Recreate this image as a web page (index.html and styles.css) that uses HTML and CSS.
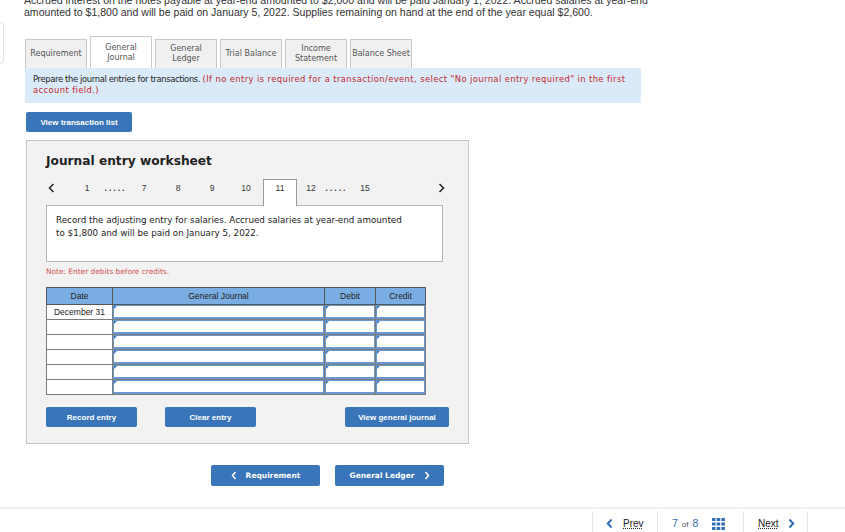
FILE: index.html
```html
<!DOCTYPE html>
<html lang="en">
<head>
    <meta charset="UTF-8" />
    <title>Journal entry worksheet</title>
    <link rel="stylesheet" href="styles.css">
</head>
<body>
    <div class="intro">
        Accrued interest on the notes payable at year-end amounted to $2,000 and will be paid January 1, 2022. Accrued salaries at year-end<br>
        amounted to $1,800 and will be paid on January 5, 2022. Supplies remaining on hand at the end of the year equal $2,600.
    </div>

    <div class="layout">
        <div class="side-tab"></div>
        <div class="main">
            <!-- TABS -->
            <div class="tabs">
                <div class="tab">Requirement</div>
                <div class="tab active">General<br>Journal</div>
                <div class="tab">General<br>Ledger</div>
                <div class="tab">Trial Balance</div>
                <div class="tab">Income<br>Statement</div>
                <div class="tab">Balance Sheet</div>
            </div>
            <div class="info">
                Prepare the journal entries for transactions. <span class="hint">(If no entry is required for a transaction/event, select "No journal entry required" in the first account field.)</span>
            </div>

            <button class="btn btn-list">View transaction list</button>

            <!-- WORKSHEET -->
            <div class="worksheet">
                <h2>Journal entry worksheet</h2>
                <div class="pager">
                    <span class="prev"><svg width="7" height="10" viewBox="0 0 7 10"><polyline points="5.5,1 1.5,5 5.5,9" fill="none" stroke="#222" stroke-width="1.5"/></svg></span>
                    <span>1</span>
                    <span class="dots">.....</span>
                    <span>7</span>
                    <span>8</span>
                    <span>9</span>
                    <span>10</span>
                    <span class="cur">11</span>
                    <span class="num12">12</span>
                    <span class="dots">.....</span>
                    <span>15</span>
                    <span class="next"><svg width="7" height="10" viewBox="0 0 7 10"><polyline points="1.5,1 5.5,5 1.5,9" fill="none" stroke="#222" stroke-width="1.5"/></svg></span>
                </div>
                <div class="desc">
                    <p>Record the adjusting entry for salaries. Accrued salaries at year-end amounted to $1,800 and will be paid on January 5, 2022.</p>
                </div>
                <p class="note">Note: Enter debits before credits.</p>

                <table class="journal">
                    <colgroup>
                        <col style="width:66px">
                        <col style="width:212px">
                        <col style="width:51px">
                        <col style="width:50px">
                    </colgroup>
                    <thead>
                        <tr><th>Date</th><th>General Journal</th><th>Debit</th><th>Credit</th></tr>
                    </thead>
                    <tbody id="rows"></tbody>
                </table>

                <div class="entry-actions">
                    <button class="btn btn-action">Record entry</button>
                    <button class="btn btn-action">Clear entry</button>
                    <button class="btn btn-action btn-view">View general journal</button>
                </div>
            </div>

            <div class="step-nav">
                <button class="step-btn"><svg width="6" height="9" viewBox="0 0 6 9"><polyline points="4.5,1 1.5,4.5 4.5,8" fill="none" stroke="#fff" stroke-width="1.5"/></svg> Requirement</button>
                <button class="step-btn">General Ledger <svg width="6" height="9" viewBox="0 0 6 9"><polyline points="1.5,1 4.5,4.5 1.5,8" fill="none" stroke="#fff" stroke-width="1.5"/></svg></button>
            </div>
        </div>
    </div>

    <!-- FOOTER -->
    <div class="footer">
        <div class="seg seg-prev">
            <svg width="7" height="11" viewBox="0 0 7 11"><polyline points="5.5,1.5 1.8,5.5 5.5,9.5" fill="none" stroke="#2f6db5" stroke-width="2"/></svg>
            <span class="link">Prev</span>
        </div>
        <div class="seg seg-count">
            <span class="page-no">7</span><span class="of">of</span><span class="page-no">8</span>
            <svg class="grid" width="13" height="12" viewBox="0 0 13 12">
                <rect x="0" y="0" width="3.5" height="3" fill="#2f6db5"/><rect x="4.7" y="0" width="3.5" height="3" fill="#2f6db5"/><rect x="9.4" y="0" width="3.5" height="3" fill="#2f6db5"/>
                <rect x="0" y="4.5" width="3.5" height="3" fill="#2f6db5"/><rect x="4.7" y="4.5" width="3.5" height="3" fill="#2f6db5"/><rect x="9.4" y="4.5" width="3.5" height="3" fill="#2f6db5"/>
                <rect x="0" y="9" width="3.5" height="3" fill="#2f6db5"/><rect x="4.7" y="9" width="3.5" height="3" fill="#2f6db5"/><rect x="9.4" y="9" width="3.5" height="3" fill="#2f6db5"/>
            </svg>
        </div>
        <div class="seg seg-next">
            <span class="link">Next</span>
            <svg width="7" height="11" viewBox="0 0 7 11"><polyline points="1.5,1.5 5.2,5.5 1.5,9.5" fill="none" stroke="#2f6db5" stroke-width="2"/></svg>
        </div>
    </div>

    <script>
        const rows = document.getElementById('rows');
        for (let i = 0; i < 6; i++) {
            const tr = document.createElement('tr');
            tr.innerHTML = `
                <td class="date">${i === 0 ? 'December 31' : ''}</td>
                <td class="field"><div class="input"></div></td>
                <td class="field"><div class="input"></div></td>
                <td class="field"><div class="input"></div></td>
            `;
            rows.appendChild(tr);
        }
    </script>
</body>
</html>
```

FILE: styles.css
```css
* {
    margin: 0;
    padding: 0;
    box-sizing: border-box;
}

body {
    font-family: "DejaVu Sans", Verdana, sans-serif;
    color: #222;
    background: #fff;
    width: 845px;
    height: 532px;
    overflow: hidden;
}

.intro {
    margin-top: -6px;
    padding-left: 24px;
    font-family: "Liberation Sans", Arial, sans-serif;
    font-size: 10.55px;
    line-height: 12px;
    color: #333;
    white-space: nowrap;
}

.layout {
    display: flex;
}

.side-tab {
    width: 4px;
    height: 42px;
    margin-top: 4px;
    border: 1px solid #e2e2e2;
    border-left: none;
    border-radius: 0 4px 4px 0;
}

.main {
    margin-left: 21px;
    padding-top: 18px;
    width: 616px;
}

/* tabs */
.tabs {
    display: flex;
    align-items: flex-end;
    gap: 3px;
    height: 32px;
}

.tab {
    width: 62px;
    height: 29px;
    padding: 0 1px;
    border: 1px solid #c9c9c9;
    border-bottom: none;
    background: #f0f0f0;
    color: #555;
    font-size: 8px;
    line-height: 10px;
    text-align: center;
    display: flex;
    align-items: center;
    justify-content: center;
}

.tab.active {
    height: 32px;
    background: #fff;
}

.info {
    background: #dbeaf8;
    height: 35px;
    padding: 6px 8px;
    font-size: 8.4px;
    line-height: 11px;
    letter-spacing: -0.35px;
}

.info .hint {
    color: #c0282e;
    letter-spacing: 0.4px;
}

/* buttons */
.btn {
    background: #3a75b9;
    color: #fff;
    border: none;
    border-radius: 2px;
    height: 20px;
    font-family: "Liberation Sans", Arial, sans-serif;
    font-weight: bold;
    font-size: 8px;
    cursor: pointer;
}

.btn-list {
    display: block;
    width: 106px;
    margin: 9px 0 0 1px;
}

/* worksheet */
.worksheet {
    width: 443px;
    margin: 8px 0 0 1px;
    padding: 12px 19px 16px 19px;
    background: #f2f2f2;
    border: 1px solid #c6c6c6;
}

.worksheet h2 {
    font-size: 12.2px;
    line-height: 16px;
    font-weight: bold;
    color: #222;
}

.pager {
    display: flex;
    height: 26px;
    margin-top: 10px;
    font-family: "Liberation Sans", Arial, sans-serif;
    font-size: 8.5px;
    color: #333;
}

.pager span {
    width: 34px;
    padding-top: 4px;
    line-height: 11px;
    text-align: center;
}

.pager .prev {
    width: 24px;
    text-align: left;
    padding: 4px 0 0 2px;
}

.pager .dots {
    width: 23px;
    letter-spacing: 2px;
    font-weight: bold;
}

.pager .num12 {
    width: 28px;
}

.pager .cur {
    position: relative;
    z-index: 1;
    height: 27px;
    background: #fff;
    border: 1px solid #9a9a9a;
    border-bottom: none;
    padding-top: 3px;
}

.pager .next {
    width: auto;
    margin-left: auto;
    padding-right: 4px;
}

.desc {
    width: 397px;
    height: 57px;
    padding: 8px 9px;
    background: #fff;
    border: 1px solid #b5b5b5;
    font-size: 8.75px;
    line-height: 13px;
    color: #222;
}

.desc p {
    max-width: 352px;
}

.note {
    margin-top: 5px;
    font-size: 7.4px;
    line-height: 10px;
    color: #d0504f;
}

/* journal table */
.journal {
    width: 379px;
    margin-top: 10px;
    border-collapse: collapse;
    table-layout: fixed;
    font-family: "Liberation Sans", Arial, sans-serif;
    font-size: 8.5px;
}

.journal th {
    height: 17px;
    background: #7aaee3;
    border: 1px solid #555;
    font-weight: normal;
    color: #222;
}

.journal td {
    height: 15px;
    padding: 0;
    background: #fff;
    border: 1px solid #7c7c7c;
}

.journal td.date {
    text-align: center;
    color: #222;
}

.input {
    position: relative;
    height: 14px;
    border: 1px solid #6b97cf;
    border-bottom-width: 2px;
    background: #fff;
}

.input::before {
    content: "";
    position: absolute;
    top: 0;
    left: 0;
    border-top: 3px solid #3b78c8;
    border-right: 3px solid transparent;
}

.entry-actions {
    display: flex;
    gap: 28px;
    margin-top: 12px;
}

.btn-action {
    width: 91px;
}

.btn-view {
    width: 104px;
    margin-left: auto;
}

/* step navigation */
.step-nav {
    display: flex;
    gap: 15px;
    margin-top: 21px;
    padding-left: 186px;
}

.step-btn {
    width: 109px;
    height: 21px;
    display: flex;
    align-items: center;
    justify-content: center;
    gap: 9px;
    background: #3a75b9;
    color: #fff;
    border: none;
    border-radius: 2px;
    font-family: "DejaVu Sans", Verdana, sans-serif;
    font-weight: bold;
    font-size: 7.5px;
}

/* footer */
.footer {
    margin-top: 21px;
    border-top: 2px solid #f0f0f0;
    display: flex;
    justify-content: flex-end;
    padding-right: 37px;
    font-family: "Liberation Sans", Arial, sans-serif;
    font-size: 10px;
    color: #222;
}

.seg {
    display: flex;
    align-items: flex-start;
    height: 30px;
    margin-top: 2px;
    padding-top: 6px;
    line-height: 13px;
    border-left: 1px solid #e6e6e6;
}

.seg svg {
    margin-top: 1px;
}

.seg-prev {
    width: 65px;
    padding-left: 13px;
    gap: 10px;
}

.seg-count {
    width: 86px;
    padding-left: 14px;
}

.seg-next {
    width: 65px;
    padding-left: 14px;
    gap: 9px;
    border-right: 1px solid #e6e6e6;
}

.link {
    text-decoration: underline dotted;
    text-underline-offset: 1px;
}

.page-no {
    color: #2f6db5;
    font-size: 10.5px;
}

.of {
    font-size: 8px;
    color: #555;
    margin: 1px 4px 0;
}

.grid {
    margin-left: 14px;
}
```
